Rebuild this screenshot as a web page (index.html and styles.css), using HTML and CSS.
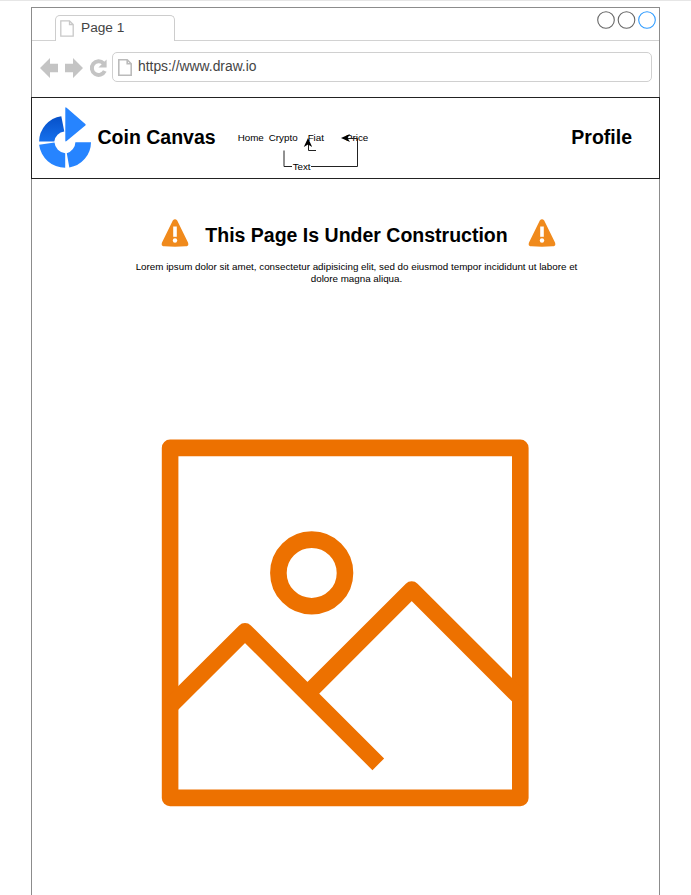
FILE: index.html
```html
<!DOCTYPE html>
<html lang="en">
<head>
<meta charset="utf-8">
<title>Coin Canvas</title>
<link rel="stylesheet" href="styles.css">
</head>
<body>
<div class="browser">
  <div class="tabs">
    <div class="tab">
      <svg class="tab-doc" width="14" height="17" viewBox="0 0 14 17"><path d="M.8.8H9.5L13.2 4.5V16.2H.8ZM9.5.8V4.5H13.2"/></svg>
      <span>Page 1</span>
    </div>
    <svg class="window-controls" width="60" height="20" viewBox="0 0 60 20"><circle cx="10" cy="10" r="8.3"/><circle cx="30.5" cy="10" r="8.3"/><circle class="blue" cx="51" cy="10" r="8.3"/></svg>
  </div>
  <div class="toolbar">
    <svg class="controls" width="70" height="22" viewBox="0 0 70 22">
      <path d="M0 11 10 1V6.8H18V15.3H10V21ZM43 11 33 1V6.8H25V15.3H33V21Z"/>
      <path class="reload" d="M63.5 6.3A6.8 6.8 0 1 0 64.8 14"/>
      <path d="M66.6 2.4V10.6H58.4Z"/>
    </svg>
    <div class="address">
      <svg width="14" height="17" viewBox="0 0 14 17"><path d="M.8.8H9.2L13.2 4.8V16.2H.8ZM9.2.8V4.8H13.2"/></svg>
      <span>https://www.draw.io</span>
    </div>
  </div>
  <header class="site-header">
    <svg class="logo" width="54" height="62" viewBox="0 0 54 62">
      <defs><linearGradient id="shade" x1="0" y1="0" x2="0" y2="1"><stop offset="0" stop-color="#0650c8"/><stop offset="1" stop-color="#1670ec"/></linearGradient></defs>
      <path fill="url(#shade)" d="M1.1 34.5A26 26 0 0 1 23.3 9.2L26.3 24.5A11.4 11.4 0 0 0 16.3 34.5Z"/>
      <path d="M27.300 1.2Q27.300-.5 28.600.8L47.300 17Q48.100 17.8 47.300 18.6L28.600 34Q27.300 35 27.300 33.4ZM1.1 37.7 16.5 35.4A11.8 11.8 0 0 0 27.2 46.2V60.8A26.5 26.5 0 0 1 1.1 37.7ZM28.8 46.2A11.8 11.8 0 0 0 37.4 35.2H53A25.8 25.8 0 0 1 31.3 60.5Z"/>
    </svg>
    <h1>Coin Canvas</h1>
    <nav>
      <span class="home">Home</span><span class="crypto">Crypto</span><span class="fiat">Fiat</span><span class="price">Price</span>
      <svg class="connectors" width="140" height="50" viewBox="235 130 140 50">
        <path d="M284 150.500V166.5H292M310 166.5H357.500V138.500H346M316 150.500H308.500V143"/>
        <path class="head" d="M341 138 350 134 347.500 138 350 142ZM308 138 303.800 147 308 144.500 312.200 147Z"/>
      </svg>
      <span class="link-label">Text</span>
    </nav>
    <h2>Profile</h2>
  </header>
  <main>
    <div class="notice">
      <svg width="28" height="28" viewBox="0 0 28 28"><path d="M11.8 1.4Q14-.9 16.200 1.4L27 23.500Q28.300 27.300 24.500 27.300Q14 28 3.500 27.300Q-.3 27.300 1 23.500Z"/><path class="mark" d="M12.200 7.500H15.800V17.800H12.200Z"/><circle class="mark" cx="14" cy="21.500" r="2.200"/></svg>
      <h2>This Page Is Under Construction</h2>
      <svg width="28" height="28" viewBox="0 0 28 28"><path d="M11.8 1.4Q14-.9 16.200 1.4L27 23.500Q28.300 27.300 24.500 27.300Q14 28 3.500 27.300Q-.3 27.300 1 23.500Z"/><path class="mark" d="M12.200 7.500H15.800V17.800H12.200Z"/><circle class="mark" cx="14" cy="21.500" r="2.200"/></svg>
    </div>
    <p>Lorem ipsum dolor sit amet, consectetur adipisicing elit, sed do eiusmod tempor incididunt ut labore et<br>dolore magna aliqua.</p>
    <svg class="picture" width="368" height="368" viewBox="161 439 368 368">
      <rect x="170.100" y="447.900" width="350.200" height="350"/>
      <circle cx="311.700" cy="572.900" r="33.300"/>
      <path d="M170.100 706 245 631.300 378.300 764.300M312 689.200 411.700 589.500 520.300 698"/>
    </svg>
  </main>
</div>
</body>
</html>
```
FILE: styles.css
```css
* { box-sizing: border-box; }
body {
  margin: 0;
  height: 895px;
  overflow: hidden;
  background: #fff;
  border-top: 1px solid #e6e6e6;
  font-family: "Liberation Sans", Arial, sans-serif;
  color: #000;
}
h1, h2, p { margin: 0; }
svg { display: block; flex: none; }
.browser {
  width: 629px;
  height: 900px;
  margin: 6px 0 0 31px;
  border: 1px solid #8c8c8c;
}
.tabs {
  display: flex;
  align-items: flex-end;
  justify-content: space-between;
  height: 33px;
  padding-left: 23px;
  border-bottom: 1px solid #d2d2d2;
}
.tab {
  display: flex;
  align-items: center;
  width: 120px;
  height: 26px;
  margin-bottom: -1px;
  padding: 0 0 2px 4px;
  gap: 7px;
  border: 1px solid #cdcdcd;
  border-bottom: 0;
  border-radius: 5px 5px 0 0;
  background: #fff;
  font-size: 13.7px;
  color: #444;
}
.tab-doc, .address svg { fill: none; stroke: #c8c8c8; stroke-width: 1.3; }
.tab-doc { margin-top: 1px; }
.window-controls {
  align-self: flex-start;
  margin: 2px 3px 0 0;
  fill: none;
  stroke: #666;
  stroke-width: 1.1;
}
.window-controls .blue { stroke: #2e9bff; }
.toolbar {
  display: flex;
  align-items: flex-start;
  height: 56px;
  padding: 11px 7px 0 8px;
}
.controls { margin-top: 5px; fill: #c4c4c4; }
.controls .reload { fill: none; stroke: #c4c4c4; stroke-width: 4; }
.address {
  display: flex;
  align-items: center;
  flex: 1;
  height: 30px;
  margin-left: 2px;
  padding: 0 0 1px 5px;
  gap: 6px;
  border: 1px solid #d0d0d0;
  border-radius: 5px;
  font-size: 13.85px;
  color: #444;
}
.address svg { stroke: #bbb; stroke-width: 1.6; margin-top: 1px; }
.address span { margin-top: -1px; }
.site-header {
  display: flex;
  align-items: center;
  height: 82px;
  margin: 0 -1px;
  padding: 0 27px 0 6px;
  border: 1px solid #222;
}
.logo { fill: #2684ff; }
h1, h2 { font-size: 19.5px; line-height: 24px; font-weight: bold; }
.site-header h1, .site-header h2 { margin-top: -3px; }
.site-header h1 { margin-left: 5.5px; white-space: nowrap; }
nav {
  position: relative;
  display: flex;
  flex: 1;
  margin-left: 22px;
  font-size: 9.8px;
  line-height: 12px;
}
.crypto { margin-left: 5px; }
.fiat { margin-left: 10px; }
.price { margin-left: 22px; }
.connectors {
  position: absolute;
  left: -2.5px;
  top: -2px;
  fill: none;
  stroke: #222;
  stroke-width: 1;
}
.connectors .head { fill: #000; stroke: none; }
.link-label {
  position: absolute;
  left: 55px;
  top: 29px;
  background: #fff;
}
.notice {
  display: flex;
  align-items: center;
  justify-content: center;
  height: 30px;
  margin: 39px 0 0 26px;
  gap: 17px;
}
.notice h2 { margin: 3px 3px 0 -1px; white-space: nowrap; }
.notice svg { fill: #f08a1c; }
.notice .mark { fill: #fff; }
main p {
  margin: 13px 0 0 22px;
  font-size: 9.8px;
  line-height: 12px;
  text-align: center;
}
.picture {
  margin: 154px 0 0 129px;
  fill: none;
  stroke: #ed7100;
  stroke-width: 16.6;
  stroke-linejoin: round;
}
```
